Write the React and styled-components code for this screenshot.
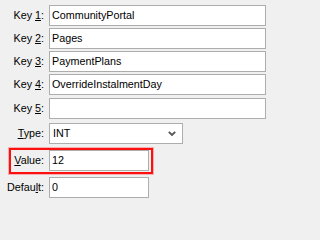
import styled, { createGlobalStyle } from 'styled-components';

// label column ends at x=44, fields start at x=49

const GlobalStyle = createGlobalStyle`
  html, body {
    margin: 0;
    padding: 0;
    background: #f0f0f0;
  }
  body {
    font-family: "Liberation Sans", Arial, sans-serif;
    font-size: 10.75px;
    color: #000;
  }
`;

const fields = [
  { label: 'Key ', key: '1', rest: ':', value: 'CommunityPortal', gap: 0 },
  { label: 'Key ', key: '2', rest: ':', value: 'Pages', gap: 2 },
  { label: 'Key ', key: '3', rest: ':', value: 'PaymentPlans', gap: 2 },
  { label: 'Key ', key: '4', rest: ':', value: 'OverrideInstalmentDay', gap: 2 },
  { label: 'Key ', key: '5', rest: ':', value: '', gap: 3 },
];

const Chevron = () => (
  <svg width="8" height="5" viewBox="0 0 8 5">
    <path d="M0.8 0.8 L4 4 L7.2 0.8" fill="none" stroke="#555" strokeWidth="1.8" />
  </svg>
);

const App = () => {
  return (
    <>
      <GlobalStyle />
      <Form>
        {fields.map((f) => (
          <Row key={f.key} $gap={f.gap}>
            <Label $width={44}>
              {f.label}<u>{f.key}</u>{f.rest}
            </Label>
            <TextBox $width={217}>{f.value}</TextBox>
          </Row>
        ))}

        <Row $gap={4}>
          <Label $width={44}>
            <u>T</u>ype:
          </Label>
          <Select>
            <span>INT</span>
            <Chevron />
          </Select>
        </Row>

        <Highlight>
          <Row $gap={0}>
            <Label $width={33}>
              <u>V</u>alue:
            </Label>
            <TextBox $width={100}>12</TextBox>
          </Row>
        </Highlight>

        <Row $gap={3}>
          <Label $width={44}>
            Defau<u>l</u>t:
          </Label>
          <TextBox $width={100}>0</TextBox>
        </Row>
      </Form>
    </>
  );
};

export default App;

const Form = styled.div`
  display: flex;
  flex-direction: column;
  align-items: flex-start;
  padding-top: 5px;
  width: 271px;
  height: 202px;
  box-sizing: border-box;
`;

const Row = styled.div`
  display: flex;
  align-items: center;
  gap: 5px;
  height: 21px;
  margin-top: ${(p) => p.$gap}px;
`;

const Label = styled.div`
  width: ${(p) => p.$width}px;
  text-align: right;
  white-space: nowrap;
  line-height: 21px;

  u {
    text-underline-offset: 1px;
  }
`;

const TextBox = styled.div`
  width: ${(p) => p.$width}px;
  height: 21px;
  box-sizing: border-box;
  border: 1px solid #adadad;
  background: #fff;
  padding: 0 2px;
  line-height: 19px;
  white-space: nowrap;
  overflow: hidden;
`;

const Select = styled.div`
  width: 134px;
  height: 21px;
  box-sizing: border-box;
  border: 1px solid #adadad;
  background: #fff;
  padding: 0 6px 0 3px;
  display: flex;
  align-items: center;
  justify-content: space-between;
  line-height: 19px;
`;

const Highlight = styled.div`
  margin-top: 4px;
  margin-left: 9px;
  padding: 0 2px 1px 0;
  border: 2px solid #ff1010;
  box-shadow: 0 0 0 1px rgba(255, 60, 60, 0.35);
`;
